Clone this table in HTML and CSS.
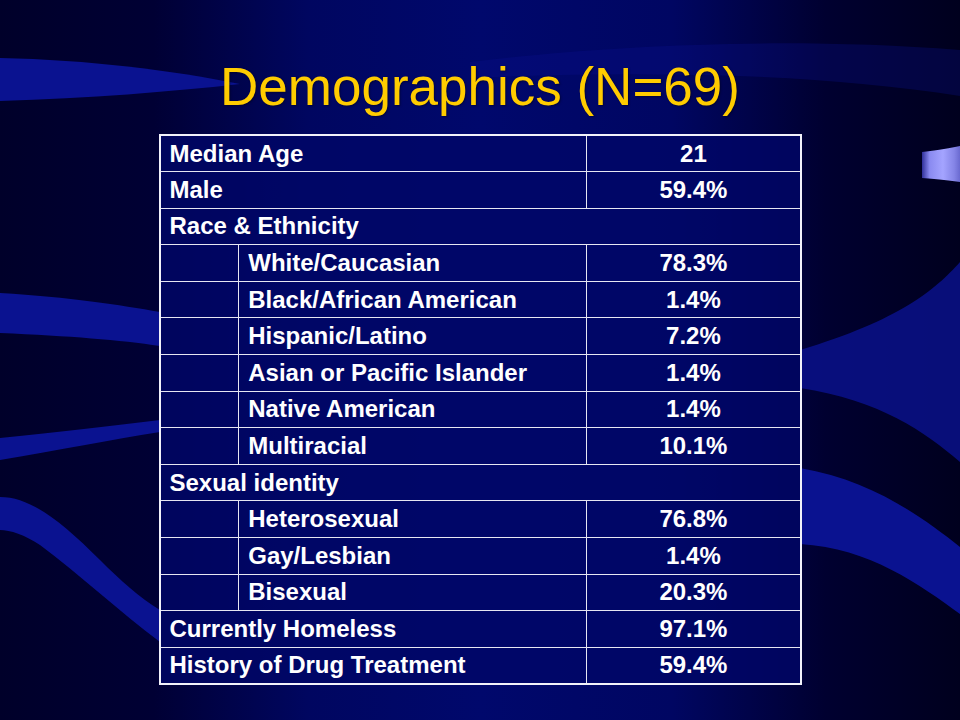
FILE: index.html
```html
<!DOCTYPE html>
<html lang="en">
<head>
<meta charset="utf-8">
<title>Demographics (N=69)</title>
<link rel="stylesheet" href="styles.css">
</head>
<body>
<div class="slide">
  <svg class="backdrop" width="960" height="720" viewBox="0 0 960 720" aria-hidden="true">
    <defs>
      <linearGradient id="bgGrad" x1="0" y1="0" x2="1" y2="0">
        <stop offset="0" stop-color="#00002a"/>
        <stop offset="0.16" stop-color="#000034"/>
        <stop offset="0.32" stop-color="#000660"/>
        <stop offset="0.5" stop-color="#00086c"/>
        <stop offset="0.7" stop-color="#000662"/>
        <stop offset="0.86" stop-color="#000030"/>
        <stop offset="1" stop-color="#00001e"/>
      </linearGradient>
      <linearGradient id="tabGrad" x1="0" y1="0" x2="1" y2="0">
        <stop offset="0" stop-color="#30309a"/>
        <stop offset="0.2" stop-color="#8a8af0"/>
        <stop offset="0.55" stop-color="#a4a4ff"/>
        <stop offset="0.85" stop-color="#8484e6"/>
        <stop offset="1" stop-color="#6a6ad0"/>
      </linearGradient>
    </defs>
    <rect width="960" height="720" fill="url(#bgGrad)"/>
    <g fill="#0a1290">
      <path d="M0,58 C90,60 170,70 240,84 C170,92 90,98 0,101 Z"/>
      <path opacity="0.3" d="M470,62 C600,46 780,36 960,50 L960,96 C820,74 650,70 470,78 Z"/>
      <path d="M0,293 C70,297 120,305 160,312 L160,346 C120,340 70,336 0,333 Z"/>
      <path d="M0,438 C60,432 110,426 160,420 L160,432 C110,440 60,450 0,460 Z"/>
      <path d="M0,497 C30,497 60,520 100,560 C120,580 140,598 160,610 L160,642 C120,612 80,575 40,545 C25,535 10,530 0,530 Z"/>
      <path opacity="0.8" d="M960,262 C935,290 900,320 800,350 L800,388 C880,400 925,432 960,462 Z"/>
      <path d="M800,468 C870,480 920,515 960,547 L960,614 C920,585 870,548 800,544 Z"/>
    </g>
    <path d="M922,152 C940,150 950,148 960,146 L960,182 C950,181 940,179 922,178 Z" fill="url(#tabGrad)"/>
  </svg>

  <h1 class="title">Demographics (N=69)</h1>

  <table class="stats">
    <colgroup>
      <col class="c-indent">
      <col class="c-label">
      <col class="c-value">
    </colgroup>
    <tbody>
      <tr><td class="label" colspan="2">Median Age</td><td class="value">21</td></tr>
      <tr><td class="label" colspan="2">Male</td><td class="value">59.4%</td></tr>
      <tr><td class="label" colspan="3">Race &amp; Ethnicity</td></tr>
      <tr><td></td><td class="label">White/Caucasian</td><td class="value">78.3%</td></tr>
      <tr><td></td><td class="label">Black/African American</td><td class="value">1.4%</td></tr>
      <tr><td></td><td class="label">Hispanic/Latino</td><td class="value">7.2%</td></tr>
      <tr><td></td><td class="label">Asian or Pacific Islander</td><td class="value">1.4%</td></tr>
      <tr><td></td><td class="label">Native American</td><td class="value">1.4%</td></tr>
      <tr><td></td><td class="label">Multiracial</td><td class="value">10.1%</td></tr>
      <tr><td class="label" colspan="3">Sexual identity</td></tr>
      <tr><td></td><td class="label">Heterosexual</td><td class="value">76.8%</td></tr>
      <tr><td></td><td class="label">Gay/Lesbian</td><td class="value">1.4%</td></tr>
      <tr><td></td><td class="label">Bisexual</td><td class="value">20.3%</td></tr>
      <tr><td class="label" colspan="2">Currently Homeless</td><td class="value">97.1%</td></tr>
      <tr><td class="label" colspan="2">History of Drug Treatment</td><td class="value">59.4%</td></tr>
    </tbody>
  </table>
</div>
</body>
</html>
```

FILE: styles.css
```css
html, body {
  margin: 0;
  padding: 0;
  background: #000030;
}

.slide {
  position: relative;
  width: 960px;
  height: 720px;
  overflow: hidden;
  font-family: "Liberation Sans", Arial, sans-serif;
}

.backdrop {
  position: absolute;
  left: 0;
  top: 0;
  z-index: 0;
}

.title {
  position: relative;
  z-index: 1;
  margin: 0;
  padding-top: 57px;
  height: 60px;
  line-height: 60px;
  font-size: 53px;
  font-weight: normal;
  text-align: center;
  color: #ffcc00;
  text-shadow: 1px 1px 2px rgba(0, 0, 20, 0.5);
}

.stats {
  position: relative;
  z-index: 1;
  margin: 17px auto 0;
  width: 643px;
  border-collapse: collapse;
  border: 2px solid #f2f2fa;
  table-layout: fixed;
  background: rgba(0, 6, 104, 0.8);
  color: #ffffff;
  font-size: 24px;
  font-weight: bold;
}

.c-indent { width: 79px; }
.c-label { width: 347px; }
.c-value { width: 213px; }

.stats tr {
  height: 36.6px;
}

.stats td {
  border: 1px solid #e6e6f2;
  padding: 0 0 0 9px;
  vertical-align: middle;
  white-space: nowrap;
  line-height: 26px;
}

.stats td.value {
  text-align: center;
  padding: 0;
}
```
